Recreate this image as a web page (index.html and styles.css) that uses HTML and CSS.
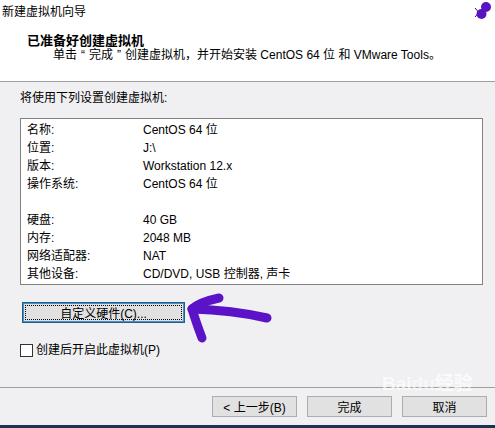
FILE: index.html
```html
<!DOCTYPE html>
<html lang="zh-CN">
  <head>
    <meta charset="UTF-8" />
    <title>新建虚拟机向导</title>
    <link rel="stylesheet" href="styles.css">
  </head>
  <body>
    <div class="wizard">
      <!-- Header -->
      <div class="header">
        <div class="title-row">
          <span class="title">新建虚拟机向导</span>
          <svg class="close" width="20" height="22" viewBox="0 0 20 22">
            <path d="M2 8 L10 17 M2 17 L10 8" stroke="#222" stroke-width="1" fill="none" />
            <circle cx="13" cy="7" r="5" fill="#5a12c4" />
            <circle cx="8.5" cy="14" r="5" fill="#5a12c4" />
          </svg>
        </div>
        <div class="heading">已准备好创建虚拟机</div>
        <div class="subtitle">单击<span class="q">“</span>完成<span class="q">”</span>创建虚拟机，并开始安装 CentOS 64 位 和 VMware Tools。</div>
      </div>

      <!-- Main -->
      <div class="main">
        <div class="label">将使用下列设置创建虚拟机:</div>
        <div class="summary">
          <div class="row"><span class="key">名称:</span><span>CentOS 64 位</span></div>
          <div class="row"><span class="key">位置:</span><span>J:\</span></div>
          <div class="row"><span class="key">版本:</span><span>Workstation 12.x</span></div>
          <div class="row"><span class="key">操作系统:</span><span>CentOS 64 位</span></div>
          <div class="row"></div>
          <div class="row"><span class="key">硬盘:</span><span>40 GB</span></div>
          <div class="row"><span class="key">内存:</span><span>2048 MB</span></div>
          <div class="row"><span class="key">网络适配器:</span><span>NAT</span></div>
          <div class="row"><span class="key">其他设备:</span><span>CD/DVD, USB 控制器, 声卡</span></div>
        </div>
        <button class="btn btn-custom">自定义硬件(C)...</button>
        <label class="check-row">
          <span class="checkbox"></span>
          <span>创建后开启此虚拟机(P)</span>
        </label>
      </div>

      <!-- Footer -->
      <div class="footer">
        <button class="btn">&lt; 上一步(B)</button>
        <button class="btn">完成</button>
        <button class="btn">取消</button>
      </div>
      <div class="taskbar"></div>
    </div>

    <!-- Annotation arrow -->
    <svg class="arrow" width="495" height="428" viewBox="0 0 495 428">
      <g stroke="#5b13c7" stroke-width="9" stroke-linecap="round" stroke-linejoin="round" fill="none">
        <path d="M267 318 Q232 310 192 309" />
        <path d="M219 298 Q200 302 192 309 Q196 322 202 338" />
      </g>
    </svg>

    <div class="watermark">
      <span class="wm-logo">Bai<b>du</b>经验</span>
    </div>
  </body>
</html>
```

FILE: styles.css
```css
* {
  margin: 0;
  padding: 0;
  box-sizing: border-box;
}

body,
html {
  width: 495px;
  height: 428px;
  overflow: hidden;
}

body {
  position: relative;
  font-family: "Liberation Sans", "Noto Sans CJK SC", sans-serif;
  font-size: 12px;
  color: #000;
  background: #f0eff1;
}

.wizard {
  display: flex;
  flex-direction: column;
  height: 428px;
}

.header {
  height: 82px;
  background: #fff;
  border-bottom: 1px solid #a0a0a0;
}

.title-row {
  display: flex;
  justify-content: space-between;
  height: 24px;
  line-height: 24px;
  padding-left: 2px;
  padding-right: 2px;
}

.heading {
  margin-top: 10px;
  padding-left: 27px;
  line-height: 14px;
  font-size: 13px;
  font-weight: bold;
}

.subtitle {
  padding-left: 53px;
  line-height: 14px;
}

.q {
  padding: 0 4px;
}

.main {
  height: 306px;
  padding: 8px 12px 0 20px;
  border-bottom: 1px solid #a0a0a0;
}

.label {
  line-height: 16px;
}

.summary {
  margin-top: 12px;
  height: 167px;
  background: #fff;
  border: 1px solid #828282;
  padding: 2px 6px 0;
}

.row {
  display: flex;
  height: 18px;
  line-height: 18px;
}

.key {
  width: 116px;
}

.btn {
  width: 85px;
  height: 21px;
  font-family: inherit;
  font-size: 12px;
  color: #000;
  background: #e1e1e1;
  border: 1px solid #adadad;
}

.btn-custom {
  display: block;
  width: 163px;
  margin-top: 17px;
  margin-left: 2px;
  border: 1px solid #1f5f8b;
  box-shadow: inset 0 0 0 1px #4a90c4;
  outline: 1px dotted #000;
  outline-offset: -4px;
}

.check-row {
  display: flex;
  align-items: center;
  gap: 3px;
  margin-top: 19px;
  line-height: 16px;
}

.checkbox {
  width: 13px;
  height: 13px;
  background: #fff;
  border: 1px solid #333;
}

.footer {
  display: flex;
  justify-content: flex-end;
  gap: 10px;
  height: 37px;
  padding: 8px 8px 0 0;
}

.taskbar {
  height: 3px;
  background: #1d3150;
}

.arrow {
  position: absolute;
  left: 0;
  top: 0;
  pointer-events: none;
}

.watermark {
  position: absolute;
  left: 382px;
  top: 374px;
  color: rgba(255, 255, 255, 0.7);
  pointer-events: none;
}

.wm-logo {
  font-size: 19px;
  line-height: 20px;
  font-weight: bold;
}

.wm-logo b {
  color: rgba(255, 255, 255, 0.55);
}
```
